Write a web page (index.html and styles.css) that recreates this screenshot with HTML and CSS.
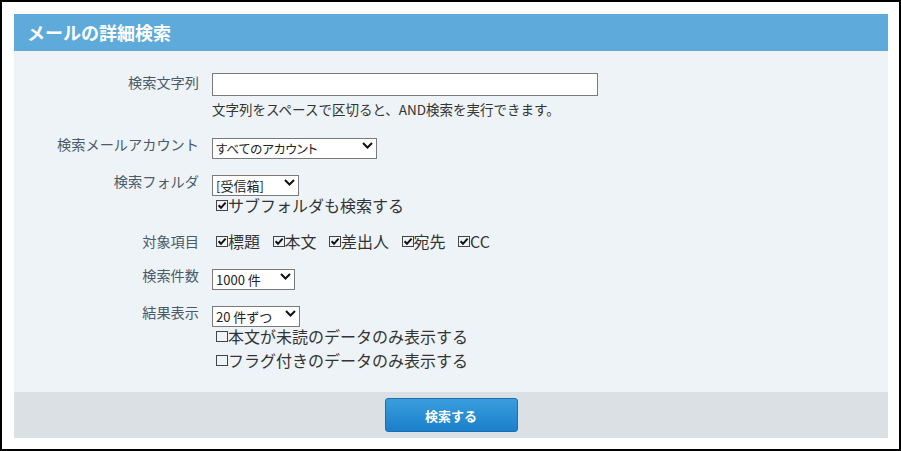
FILE: index.html
```html
<!DOCTYPE html>
<html lang="ja">
<head>
<meta charset="utf-8">
<title>メールの詳細検索</title>
<link rel="stylesheet" href="styles.css">
</head>
<body>
<div class="frame">
  <div class="header">メールの詳細検索</div>
  <form class="panel">
    <div class="row row-text">
      <div class="label">検索文字列</div>
      <div class="value">
        <input class="textbox" type="text">
        <div class="hint">文字列をスペースで区切ると、AND検索を実行できます。</div>
      </div>
    </div>
    <div class="row row-select">
      <div class="label">検索メールアカウント</div>
      <div class="value">
        <div class="sel sel-account">
          <select><option>すべてのアカウント</option></select>
          <svg class="chev" width="11" height="7" viewBox="0 0 11 7"><path d="M1 1 L5.5 5.5 L10 1" fill="none" stroke="#111" stroke-width="2"/></svg>
        </div>
      </div>
    </div>
    <div class="row row-select">
      <div class="label">検索フォルダ</div>
      <div class="value">
        <div class="sel sel-folder">
          <select><option>[受信箱]</option></select>
          <svg class="chev" width="11" height="7" viewBox="0 0 11 7"><path d="M1 1 L5.5 5.5 L10 1" fill="none" stroke="#111" stroke-width="2"/></svg>
        </div>
        <div class="checks">
          <label class="chk"><svg width="16" height="16" viewBox="0 0 16 16"><rect x="4.5" y="3.5" width="11" height="10" fill="none" stroke="#444"/><path d="M6.6 8.2 L9 10.8 L13.6 5.6" fill="none" stroke="#111" stroke-width="2"/></svg>サブフォルダも検索する</label>
        </div>
      </div>
    </div>
    <div class="row row-check">
      <div class="label">対象項目</div>
      <div class="value">
        <div class="checks items">
          <label class="chk"><svg width="16" height="16" viewBox="0 0 16 16"><rect x="4.5" y="3.5" width="11" height="10" fill="none" stroke="#444"/><path d="M6.6 8.2 L9 10.8 L13.6 5.6" fill="none" stroke="#111" stroke-width="2"/></svg>標題</label>
          <label class="chk"><svg width="16" height="16" viewBox="0 0 16 16"><rect x="4.5" y="3.5" width="11" height="10" fill="none" stroke="#444"/><path d="M6.6 8.2 L9 10.8 L13.6 5.6" fill="none" stroke="#111" stroke-width="2"/></svg>本文</label>
          <label class="chk"><svg width="16" height="16" viewBox="0 0 16 16"><rect x="4.5" y="3.5" width="11" height="10" fill="none" stroke="#444"/><path d="M6.6 8.2 L9 10.8 L13.6 5.6" fill="none" stroke="#111" stroke-width="2"/></svg>差出人</label>
          <label class="chk"><svg width="16" height="16" viewBox="0 0 16 16"><rect x="4.5" y="3.5" width="11" height="10" fill="none" stroke="#444"/><path d="M6.6 8.2 L9 10.8 L13.6 5.6" fill="none" stroke="#111" stroke-width="2"/></svg>宛先</label>
          <label class="chk"><svg width="16" height="16" viewBox="0 0 16 16"><rect x="4.5" y="3.5" width="11" height="10" fill="none" stroke="#444"/><path d="M6.6 8.2 L9 10.8 L13.6 5.6" fill="none" stroke="#111" stroke-width="2"/></svg>CC</label>
        </div>
      </div>
    </div>
    <div class="row row-select">
      <div class="label">検索件数</div>
      <div class="value">
        <div class="sel sel-count">
          <select><option>1000 件</option></select>
          <svg class="chev" width="11" height="7" viewBox="0 0 11 7"><path d="M1 1 L5.5 5.5 L10 1" fill="none" stroke="#111" stroke-width="2"/></svg>
        </div>
      </div>
    </div>
    <div class="row row-select">
      <div class="label">結果表示</div>
      <div class="value">
        <div class="sel sel-page">
          <select><option>20 件ずつ</option></select>
          <svg class="chev" width="11" height="7" viewBox="0 0 11 7"><path d="M1 1 L5.5 5.5 L10 1" fill="none" stroke="#111" stroke-width="2"/></svg>
        </div>
        <div class="checks">
          <label class="chk"><svg width="16" height="16" viewBox="0 0 16 16"><rect x="4.5" y="3.5" width="11" height="10" fill="none" stroke="#444"/></svg>本文が未読のデータのみ表示する</label>
        </div>
        <div class="checks">
          <label class="chk"><svg width="16" height="16" viewBox="0 0 16 16"><rect x="4.5" y="3.5" width="11" height="10" fill="none" stroke="#444"/></svg>フラグ付きのデータのみ表示する</label>
        </div>
      </div>
    </div>
  </form>
  <div class="footer">
    <button class="btn" type="button">検索する</button>
  </div>
</div>
</body>
</html>
```

FILE: styles.css
```css
* { box-sizing: border-box; }
html, body { margin: 0; padding: 0; background: #fff; }
body {
  font-family: "Noto Sans CJK JP", "Noto Sans", sans-serif;
  color: #333;
}
.frame {
  width: 901px;
  height: 451px;
  border: 2px solid #000;
  padding: 12px 11px 11px 12px;
  background: #fff;
}
.header {
  height: 37px;
  background: #5eabdb;
  color: #fff;
  font-size: 18px;
  font-weight: bold;
  line-height: 37px;
  padding-left: 13px;
}
.panel {
  margin: 0;
  background: #eef3f7;
  padding: 22px 0 20px 0;
}
.row {
  display: grid;
  grid-template-columns: 185px 1fr;
  column-gap: 13px;
  align-items: start;
}
.row + .row { margin-top: 16px; }
.row.row-check { margin-top: 12px; }
.row.row-check + .row { margin-top: 13px; }
.label {
  text-align: right;
  font-size: 14.2px;
  line-height: 18px;
  color: #4a5a68;
  white-space: nowrap;
}
.row-check .label { padding-top: 3px; }
.value { display: flex; flex-direction: column; align-items: flex-start; }
.textbox {
  width: 386px;
  height: 23px;
  border: 1px solid #7a7a7a;
  background: #fff;
  margin: 0;
  padding: 0 4px;
  font: 13px "Noto Sans CJK JP", sans-serif;
}
.hint {
  margin-top: 3px;
  font-size: 13.5px;
  line-height: 20px;
  color: #333;
  white-space: nowrap;
}
.sel { position: relative; height: 21px; }
.sel select {
  -webkit-appearance: none;
  appearance: none;
  width: 100%;
  height: 21px;
  border: 1px solid #7a7a7a;
  border-radius: 0;
  background: #fff;
  margin: 0;
  padding: 0 16px 0 3px;
  font: 13px "Noto Sans CJK JP", sans-serif;
  color: #222;
  line-height: 19px;
}
.sel-account select { font-size: 12.5px; font-feature-settings: "palt"; }
.sel .chev {
  position: absolute;
  right: 4px;
  top: 7px;
  pointer-events: none;
}
.sel-account { width: 165px; }
.sel-folder { width: 87px; }
.sel-count { width: 83px; }
.sel-page { width: 88px; }
.checks {
  display: flex;
  align-items: center;
  height: 24px;
  gap: 8.5px;
  font-size: 16px;
  line-height: 24px;
  color: #333;
  white-space: nowrap;
}
.chk { display: inline-flex; align-items: center; }
.chk svg { display: block; flex: none; }
.footer {
  height: 46px;
  background: #dbe0e4;
  display: flex;
  justify-content: center;
  align-items: center;
}
.btn {
  width: 133px;
  height: 34px;
  border: 1px solid #1d6eac;
  border-radius: 3px;
  background: linear-gradient(#3a9ddd, #1a80cb);
  color: #fff;
  font: bold 13px "Noto Sans CJK JP", sans-serif;
  padding: 0;
  margin: 0;
}
```
